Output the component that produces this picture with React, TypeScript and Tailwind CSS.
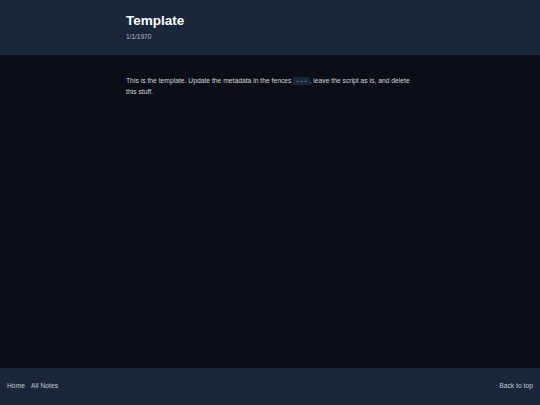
export default function App() {
  return (
    <div className="min-h-screen flex flex-col bg-[#0b0e17] text-[#e5e7eb] font-['Liberation_Sans',Arial,sans-serif]">
      {/* Cabecera */}
      <header className="bg-[#1c263a] h-[55px] shrink-0">
        <div className="max-w-[288px] mx-auto pt-[13px]">
          <h1 className="text-[13.5px] leading-[16px] font-bold text-white">Template</h1>
          <p className="text-[6.5px] leading-[9px] mt-[3px] text-[#b7bdc8]">1/1/1970</p>
        </div>
      </header>

      {/* Contenido */}
      <main className="flex-1">
        <div className="max-w-[288px] mx-auto pt-[21px]">
          <p className="text-[6.75px] leading-[10.5px] text-[#d1d5db]">
            This is the template. Update the metadata in the fences{" "}
            <code className="font-['Liberation_Mono',monospace] bg-[#1c263a] rounded-[2px] px-[2px] text-[#9ca3af]">
              ---
            </code>
            , leave the script as is, and delete this stuff.
          </p>
        </div>
      </main>

      {/* Pie */}
      <footer className="bg-[#1c263a] h-[37px] shrink-0 flex items-center justify-between px-[7px] text-[6.75px] text-[#c3c8d2]">
        <nav className="flex gap-[6px]">
          <a href="#">Home</a>
          <a href="#">All Notes</a>
        </nav>
        <a href="#">Back to top</a>
      </footer>
    </div>
  );
}
